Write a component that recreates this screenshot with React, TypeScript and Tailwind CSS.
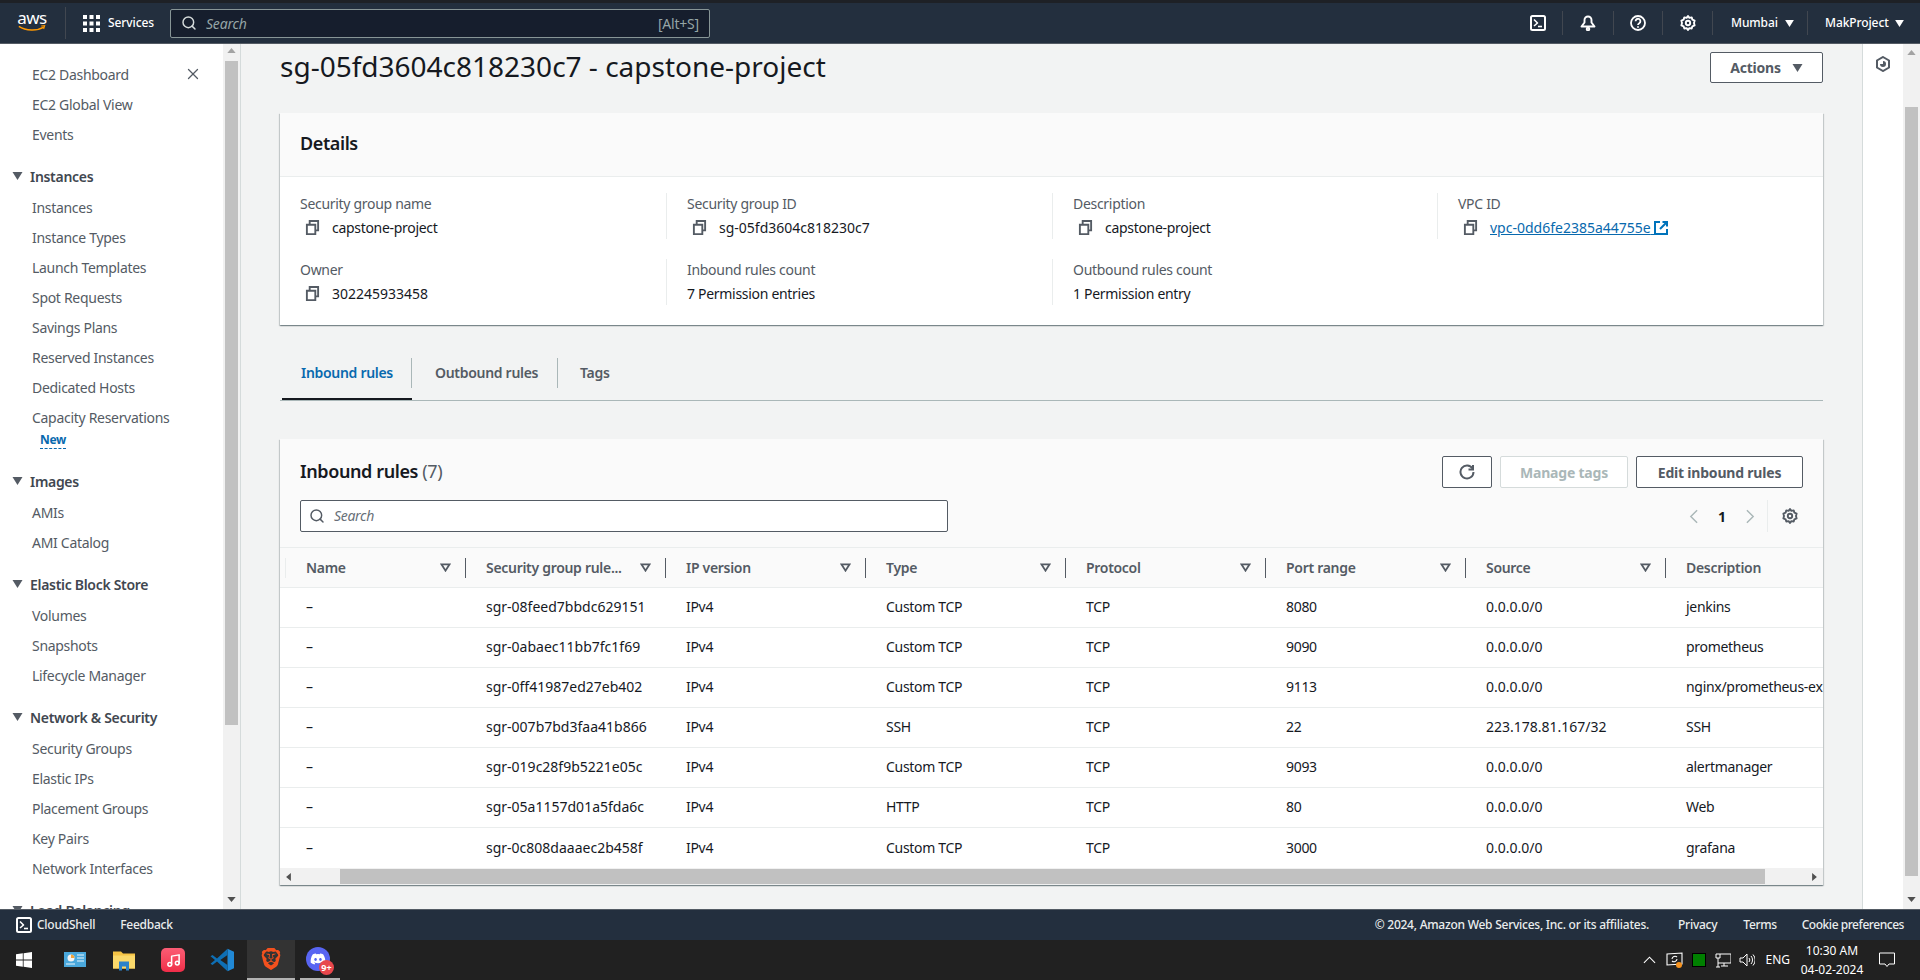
import { Music, Search, X } from "lucide-react";
import { FaDiscord } from "react-icons/fa";
import { SiBrave } from "react-icons/si";

const navGroups = [
  { title: "", items: ["EC2 Dashboard", "EC2 Global View", "Events"] },
  {
    title: "Instances",
    items: [
      "Instances",
      "Instance Types",
      "Launch Templates",
      "Spot Requests",
      "Savings Plans",
      "Reserved Instances",
      "Dedicated Hosts",
      "Capacity Reservations",
    ],
  },
  { title: "Images", items: ["AMIs", "AMI Catalog"] },
  { title: "Elastic Block Store", items: ["Volumes", "Snapshots", "Lifecycle Manager"] },
  {
    title: "Network & Security",
    items: ["Security Groups", "Elastic IPs", "Placement Groups", "Key Pairs", "Network Interfaces"],
  },
  { title: "Load Balancing", items: [] },
];

const columns = ["Name", "Security group rule...", "IP version", "Type", "Protocol", "Port range", "Source", "Description"];

const rules = [
  ["–", "sgr-08feed7bbdc629151", "IPv4", "Custom TCP", "TCP", "8080", "0.0.0.0/0", "jenkins"],
  ["–", "sgr-0abaec11bb7fc1f69", "IPv4", "Custom TCP", "TCP", "9090", "0.0.0.0/0", "prometheus"],
  ["–", "sgr-0ff41987ed27eb402", "IPv4", "Custom TCP", "TCP", "9113", "0.0.0.0/0", "nginx/prometheus-exporter"],
  ["–", "sgr-007b7bd3faa41b866", "IPv4", "SSH", "TCP", "22", "223.178.81.167/32", "SSH"],
  ["–", "sgr-019c28f9b5221e05c", "IPv4", "Custom TCP", "TCP", "9093", "0.0.0.0/0", "alertmanager"],
  ["–", "sgr-05a1157d01a5fda6c", "IPv4", "HTTP", "TCP", "80", "0.0.0.0/0", "Web"],
  ["–", "sgr-0c808daaaec2b458f", "IPv4", "Custom TCP", "TCP", "3000", "0.0.0.0/0", "grafana"],
];

const details = [
  [
    { label: "Security group name", value: "capstone-project", copy: true },
    { label: "Security group ID", value: "sg-05fd3604c818230c7", copy: true, wide: true },
    { label: "Description", value: "capstone-project", copy: true },
    { label: "VPC ID", value: "vpc-0dd6fe2385a44755e", copy: true, link: true, wide: true },
  ],
  [
    { label: "Owner", value: "302245933458", copy: true, wide: true },
    { label: "Inbound rules count", value: "7 Permission entries" },
    { label: "Outbound rules count", value: "1 Permission entry" },
  ],
];

function Caret({ className }: { className: string }) {
  return (
    <svg viewBox="0 0 10 8" className={className} fill="currentColor">
      <path d="M0 0h10L5 8z" />
    </svg>
  );
}

function CopyIcon() {
  return (
    <svg viewBox="0 0 16 16" className="h-[15px] w-[15px] shrink-0 text-[#545b64]" fill="none" stroke="currentColor" strokeWidth="2">
      <path d="M2 5h9v10H2z" />
      <path d="M5 5V1h9v10h-3" />
    </svg>
  );
}

function FilterIcon() {
  return (
    <svg viewBox="0 0 12 10" className="h-[9px] w-[11px] text-[#545b64]" fill="none" stroke="currentColor" strokeWidth="2">
      <path d="M1.500 1.500h9L6 8.500z" />
    </svg>
  );
}

function GearIcon({ className }: { className: string }) {
  return (
    <svg viewBox="0 0 16 16" className={className} fill="none" stroke="currentColor" strokeWidth="1.900" strokeLinejoin="round">
      <path d="M8 1l1.400 1.900 2.300-.5.7 2.300 2.200.9-.6 2.400.6 2.400-2.200.9-.7 2.200-2.300-.4L8 15l-1.400-1.900-2.300.4-.7-2.200-2.200-.9.6-2.400-.6-2.400 2.200-.9.7-2.300 2.300.5z" />
      <circle cx="8" cy="8" r="2.200" />
    </svg>
  );
}

function ShellIcon({ className }: { className: string }) {
  return (
    <svg viewBox="0 0 16 16" className={className} fill="none" stroke="currentColor" strokeWidth="2" strokeLinejoin="round">
      <rect x="1" y="1" width="14" height="14" rx="1.500" />
      <path d="M4 4.500L7.500 8 4 11" strokeWidth="1.600" />
      <path d="M8 11.500h4" strokeWidth="1.600" />
    </svg>
  );
}

function TopNav() {
  return (
    <div className="shrink-0">
      <div className="h-[3px] bg-[#1e2126]" />
      <header className="flex h-[41px] items-center border-b border-[#545b64] bg-[#232f3e] text-white">
        <div className="flex h-[32px] w-[66px] flex-col items-center justify-center border-r border-[#414750] pr-[1px]">
          <span className="-mt-[5px] text-[17px] leading-[18px] tracking-[-0.5px]">aws</span>
          <svg viewBox="0 0 32 8" className="-mt-[2px] h-[7px] w-[32px]" fill="none">
            <path d="M1 1.500C9 7 22 7 29.500 2.500" stroke="#ff9900" strokeWidth="1.800" />
            <path d="M26.500 1.200l4-.4-1.200 3.800" stroke="#ff9900" strokeWidth="1.200" />
          </svg>
        </div>
        <svg viewBox="0 0 17 17" className="ml-[17px] h-[17px] w-[17px]" fill="currentColor">
          <path d="M0 0h4v4H0zM6.500 0h4v4h-4zM13 0h4v4h-4zM0 6.500h4v4H0zM6.500 6.500h4v4h-4zM13 6.500h4v4h-4zM0 13h4v4H0zM6.500 13h4v4h-4zM13 13h4v4h-4z" />
        </svg>
        <span className="ml-2 w-[62px] text-[12px] font-medium tracking-[-0.1px]">Services</span>
        <div className="flex h-[29px] w-[540px] items-center rounded-[2px] border border-[#879596] bg-[#161e2d] px-[10px] text-[14px] tracking-[-0.2px] text-[#95a5a6]">
          <Search className="h-4 w-4 text-[#d5dbdb]" strokeWidth={2.2} />
          <span className="ml-[9px] flex-1 italic">Search</span>
          <span>[Alt+S]</span>
        </div>
        <div className="ml-auto flex h-full items-center">
          <div className="flex h-[24px] w-[50px] items-center justify-center border-r border-[#414750] pl-[1px]">
            <ShellIcon className="h-4 w-4" />
          </div>
          <div className="flex h-[24px] w-[51px] items-center justify-center border-r border-[#414750]">
            <svg viewBox="0 0 16 16" className="h-4 w-4" fill="none" stroke="currentColor" strokeWidth="1.900" strokeLinejoin="round">
              <path d="M1.500 11.500L4.500 7.500V5a3.500 3.500 0 0 1 7 0v2.500l3 4z" />
              <circle cx="8" cy="14" r="1.300" />
            </svg>
          </div>
          <div className="flex h-[24px] w-[49px] items-center justify-center border-r border-[#414750]">
            <svg viewBox="0 0 16 16" className="h-4 w-4" fill="none" stroke="currentColor" strokeWidth="1.800">
              <circle cx="8" cy="8" r="7" />
              <path d="M5.600 6.200a2.400 2.400 0 1 1 3.700 2c-.9.6-1.300 1-1.300 1.800" />
              <path d="M8 11.200v1.600" />
            </svg>
          </div>
          <div className="flex h-[24px] w-[50px] items-center justify-center border-r border-[#414750]">
            <GearIcon className="h-4 w-4" />
          </div>
          <div className="flex h-[24px] w-[95px] items-center border-r border-[#414750] pl-[18px] text-[12px] font-medium tracking-[-0.1px]">
            Mumbai
            <Caret className="ml-[7px] h-[7px] w-[9px]" />
          </div>
          <div className="flex w-[112px] items-center pl-[17px] text-[12px] font-medium tracking-[-0.1px]">
            MakProject
            <Caret className="ml-[6px] h-[7px] w-[9px]" />
          </div>
        </div>
      </header>
    </div>
  );
}

function Sidebar() {
  return (
    <aside className="flex w-[241px] shrink-0 border-r border-[#d5dbdb] bg-white">
      <div className="w-[223px] overflow-hidden pt-[15px] text-[14px] tracking-[-0.3px] text-[#545b64]">
        {navGroups.map((group) => (
          <div key={group.title} className="mb-[12px]">
            {group.title && (
              <div className="flex h-[31px] items-center pb-[1px] pl-[12px] font-semibold">
                <Caret className="mr-[7px] h-[8px] w-[11px]" />
                <span className="text-[#414750]">{group.title}</span>
              </div>
            )}
            {group.items.map((item) => (
              <div key={item} className="relative flex h-[30px] items-center pl-[32px]">
                {item}
                {item === "EC2 Dashboard" && (
                  <X className="absolute left-[184px] top-[6px] h-[18px] w-[18px]" strokeWidth={1.7} />
                )}
              </div>
            ))}
            {group.title === "Instances" && (
              <div className="h-[22px] pl-[40px] text-[12px] leading-[16px] font-bold text-[#0869ae]">
                <span className="border-b border-dashed border-[#0869ae]">New</span>
              </div>
            )}
          </div>
        ))}
      </div>
      <Scrollbar thumbHeight={664} arrowTop={4} className="w-[17px]" thumbMargin={7} />
    </aside>
  );
}

function Scrollbar({
  thumbHeight,
  arrowTop,
  thumbMargin,
  className,
}: {
  thumbHeight: number;
  arrowTop: number;
  thumbMargin: number;
  className: string;
}) {
  return (
    <div className={`flex flex-col items-center bg-[#f1f1f1] ${className}`}>
      <div style={{ paddingTop: arrowTop }} className="h-[17px] shrink-0">
        <svg viewBox="0 0 10 6" className="h-[5px] w-[9px] text-[#a3a3a3]" fill="currentColor">
          <path d="M5 0l5 6H0z" />
        </svg>
      </div>
      <div style={{ height: thumbHeight, marginTop: thumbMargin - 7 }} className="w-[13px] bg-[#c1c1c1]" />
      <svg viewBox="0 0 10 6" className="mt-auto mb-[7px] h-[5px] w-[9px] text-[#505050]" fill="currentColor">
        <path d="M0 0h10L5 6z" />
      </svg>
    </div>
  );
}

function DetailsCard() {
  return (
    <section className="bg-white shadow-[0_1px_1px_0_rgba(0,28,36,0.3),1px_1px_1px_0_rgba(0,28,36,0.15),-1px_1px_1px_0_rgba(0,28,36,0.15)]">
      <div className="flex h-[64px] items-center border-b border-[#eaeded] bg-[#fafafa] px-5 pb-[3px]">
        <h2 className="text-[18px] font-semibold tracking-[-0.4px] text-[#16191f]">Details</h2>
      </div>
      <div className="flex flex-col gap-5 pt-[16px] pb-5 pl-5 text-[14px] tracking-[-0.3px]">
        {details.map((row, rowIndex) => (
          <div key={rowIndex} className="grid grid-cols-[366px_386px_385px_365px]">
            {row.map((field, i) => (
              <div key={field.label} className={i === 0 ? "h-[46px]" : "h-[46px] border-l border-[#eaeded] pl-5"}>
                <div className="flex h-[23px] items-center pb-[2px] text-[#545b64]">{field.label}</div>
                <div className={field.wide ? "flex h-[23px] items-center tracking-[0px] text-[#16191f]" : "flex h-[23px] items-center text-[#16191f]"}>
                  {field.copy && (
                    <span className="mr-[12px] ml-[5px]">
                      <CopyIcon />
                    </span>
                  )}
                  {field.link ? (
                    <span className="flex items-center text-[#0869ae]">
                      <span className="underline">{field.value}&nbsp;</span>
                      <svg viewBox="0 0 14 14" className="h-[14px] w-[14px] text-[#0073bb]" fill="none" stroke="currentColor" strokeWidth="2">
                        <path d="M6 1H1v12h12V8" />
                        <path d="M6 8l7-7M8.500 1H13v4.500" />
                      </svg>
                    </span>
                  ) : (
                    field.value
                  )}
                </div>
              </div>
            ))}
          </div>
        ))}
      </div>
    </section>
  );
}

function Tabs() {
  return (
    <div className="mt-[33px] flex h-[43px] border-b border-[#aab7b8] pl-[2px] text-[14px] font-semibold tracking-[-0.3px] text-[#545b64]">
      <div className="h-[42px] w-[130px] border-b-[2px] border-[#16191f]">
        <div className="flex h-[30px] items-center border-r border-[#aab7b8] pb-[1px] pl-[19px] text-[#0869ae]">Inbound rules</div>
      </div>
      <div className="flex h-[30px] w-[146px] items-center border-r border-[#aab7b8] pb-[1px] pl-[23px]">Outbound rules</div>
      <div className="flex h-[30px] items-center pb-[1px] pl-[22px]">Tags</div>
    </div>
  );
}

function RulesCard() {
  return (
    <section className="mt-[38px] bg-white shadow-[0_1px_1px_0_rgba(0,28,36,0.3),1px_1px_1px_0_rgba(0,28,36,0.15),-1px_1px_1px_0_rgba(0,28,36,0.15)]">
      <div className="h-[109px] border-b border-[#eaeded] bg-[#fafafa] px-5 pt-[17px]">
        <div className="flex h-[32px] items-center">
          <h2 className="-mt-[2px] text-[18px] font-semibold tracking-[-0.4px] text-[#16191f]">
            Inbound rules <span className="font-normal text-[#545b64]">(7)</span>
          </h2>
          <div className="ml-auto flex gap-2 text-[14px] font-bold tracking-[-0.2px]">
            <button className="flex h-[32px] w-[50px] items-center justify-center rounded-[2px] border border-[#545b64] bg-white text-[#545b64]">
              <svg viewBox="0 0 16 16" className="h-4 w-4" fill="none" stroke="currentColor" strokeWidth="2">
                <path d="M13.500 4.500A6.500 6.500 0 1 0 14.500 8" />
                <path d="M14 1v4.500H9.500" />
              </svg>
            </button>
            <button className="h-[32px] w-[128px] rounded-[2px] border border-[#d5dbdb] bg-white text-[#aab7b8]">Manage tags</button>
            <button className="h-[32px] w-[167px] rounded-[2px] border border-[#545b64] bg-white text-[#545b64]">Edit inbound rules</button>
          </div>
        </div>
        <div className="mt-3 flex items-center">
          <div className="flex h-[32px] w-[648px] items-center rounded-[2px] border border-[#545b64] bg-white pb-[1px] pl-2">
            <Search className="h-4 w-4 text-[#545b64]" strokeWidth={2.2} />
            <span className="ml-[9px] text-[14px] italic tracking-[-0.3px] text-[#687078]">Search</span>
          </div>
          <div className="ml-auto flex h-[32px] items-center text-[14px] font-bold text-[#16191f]">
            <svg viewBox="0 0 10 16" className="h-[15px] w-[9px] text-[#aab7b8]" fill="none" stroke="currentColor" strokeWidth="1.600">
              <path d="M9 1L2 8l7 7" />
            </svg>
            <span className="mx-[20px]">1</span>
            <svg viewBox="0 0 10 16" className="h-[15px] w-[9px] text-[#aab7b8]" fill="none" stroke="currentColor" strokeWidth="1.600">
              <path d="M1 1l7 7-7 7" />
            </svg>
            <div className="ml-[12px] flex h-[32px] items-center border-l border-[#eaeded] pl-[14px] pr-[5px]">
              <GearIcon className="h-4 w-4 text-[#545b64]" />
            </div>
          </div>
        </div>
      </div>
      <div className="overflow-hidden">
        <div className="flex h-[40px] w-max items-center border-b border-[#eaeded] bg-[#fafafa] pl-[5px] text-[14px] font-semibold tracking-[-0.3px] text-[#545b64]">
          {columns.map((col, i) => (
            <div
              key={col}
              className={
                i === 0
                  ? "flex h-[20px] w-[180px] items-center border-l border-[#eaeded] pl-[20px]"
                  : "flex h-[20px] w-[200px] items-center border-l border-[#545b64] pl-[20px]"
              }
            >
              <span className="flex-1 whitespace-nowrap">{col}</span>
              {i < columns.length - 1 && (
                <span className="mr-[14px] flex items-center">
                  <FilterIcon />
                </span>
              )}
            </div>
          ))}
        </div>
        {rules.map((rule) => (
          <div key={rule[1]} className="flex h-[40px] w-max items-center border-b border-[#eaeded] pb-[2px] pl-[5px] text-[14px] tracking-[-0.3px] text-[#16191f] last:border-b-0">
            {rule.map((cell, i) => (
              <div
                key={i}
                className={
                  i === 0
                    ? "w-[180px] pl-[21px]"
                    : i === 1 || i === 6
                      ? "w-[200px] whitespace-nowrap pl-[21px] tracking-[0px]"
                      : "w-[200px] whitespace-nowrap pl-[21px]"
                }
              >
                {cell}
              </div>
            ))}
          </div>
        ))}
      </div>
      <div className="flex h-[17px] items-center bg-[#f1f1f1]">
        <svg viewBox="0 0 6 10" className="ml-[6px] h-[8px] w-[5px] text-[#505050]" fill="currentColor">
          <path d="M6 0v10L0 5z" />
        </svg>
        <div className="ml-[49px] h-[15px] w-[1425px] bg-[#c1c1c1]" />
        <svg viewBox="0 0 6 10" className="ml-[47px] h-[8px] w-[5px] text-[#505050]" fill="currentColor">
          <path d="M0 0v10l6-5z" />
        </svg>
      </div>
    </section>
  );
}

function Footer() {
  return (
    <footer className="flex h-[31px] shrink-0 items-center border-t border-[#545b64] bg-[#232f3e] px-4 text-[12px] font-medium tracking-[-0.25px] text-[#eaeded]">
      <ShellIcon className="h-4 w-4 text-white" />
      <span className="ml-[5px]">CloudShell</span>
      <span className="ml-[25px]">Feedback</span>
      <span className="ml-auto">© 2024, Amazon Web Services, Inc. or its affiliates.</span>
      <span className="ml-[29px]">Privacy</span>
      <span className="ml-[26px] tracking-[-0.35px]">Terms</span>
      <span className="ml-[25px] tracking-[-0.45px]">Cookie preferences</span>
    </footer>
  );
}

function Taskbar() {
  return (
    <div className="flex h-[40px] shrink-0 items-center bg-[#212121] text-white">
      <svg viewBox="0 0 16 16" className="ml-4 h-4 w-4" fill="currentColor">
        <path d="M0 2.300L6.800 1.300v6.300H0zM7.600 1.200L16 0v7.600H7.600zM0 8.400h6.800v6.300L0 13.700zM7.600 8.400H16V16l-8.400-1.200z" />
      </svg>
      <svg viewBox="0 0 22 16" className="ml-[32px] h-[16px] w-[22px]">
        <rect width="22" height="15" fill="#4aa8dc" />
        <circle cx="7" cy="6" r="3.500" fill="#f3f3f3" />
        <path d="M7 6V2.500A3.500 3.500 0 0 1 10.500 6z" fill="#f4a43a" />
        <path d="M13 3h7M13 6h7M13 9h7M2 12h9" stroke="#eaf5fb" strokeWidth="1.200" />
      </svg>
      <svg viewBox="0 0 22 20" className="ml-[27px] h-[21px] w-[22px]">
        <path d="M0 1h8l2 2h12v15H0z" fill="#f6c445" />
        <path d="M0 5h22v13H0z" fill="#fbd96a" />
        <path d="M6 11h10v9h-3v-4H9v4H6z" fill="#2c82c9" />
      </svg>
      <div className="ml-[26px] flex h-6 w-6 items-center justify-center rounded-[5px] bg-gradient-to-b from-[#fb5c74] to-[#f02c48]">
        <Music className="h-[15px] w-[15px]" strokeWidth={2.4} />
      </div>
      <svg viewBox="0 0 24 24" className="ml-[25px] h-6 w-6">
        <path d="M17.500 0.700L24 3.800v16.400l-6.500 3.100z" fill="#2189d6" />
        <path d="M17.500 0.700L7 10.500 2.500 7 0.500 8.200 5 12l-4.500 3.800 2 1.200L7 13.500l10.500 9.800V17L10.300 12l7.200-5z" fill="#0e6fb5" />
      </svg>
      <div className="ml-[13px] flex h-[40px] w-[48px] items-center justify-center border-b-2 border-[#b3b3b3] bg-[#333333]">
        <SiBrave className="h-[24px] w-[22px] text-[#f4511e]" />
      </div>
      <div className="relative ml-[5px] flex h-[40px] w-[40px] items-center justify-center border-b-2 border-[#b3b3b3]">
        <div className="-ml-[4px] flex h-[24px] w-[24px] items-center justify-center rounded-full bg-[#5865f2]">
          <FaDiscord className="h-[16px] w-[16px]" />
        </div>
        <span className="absolute left-[19px] top-[20px] flex h-[15px] w-[15px] items-center justify-center rounded-full bg-[#e8474c] text-[9px] font-bold">
          9+
        </span>
      </div>
      <div className="ml-auto flex items-center pr-[25px]">
        <svg viewBox="0 0 14 8" className="h-[8px] w-[13px]" fill="none" stroke="currentColor" strokeWidth="1.200">
          <path d="M1 7l6-6 6 6" />
        </svg>
        <svg viewBox="0 0 18 18" className="ml-[10px] h-[18px] w-[18px]" fill="none" stroke="currentColor" strokeWidth="1.100">
          <path d="M1 3l15-1v11l-15 1z" />
          <path d="M6 8a3 3 0 0 1 5-2M11 8a3 3 0 0 1-5 2" />
          <circle cx="13" cy="14" r="3" fill="#f7931e" stroke="none" />
        </svg>
        <div className="ml-[8px] h-[14px] w-[14px] border border-black bg-[#008000]" />
        <svg viewBox="0 0 16 16" className="ml-[9px] h-4 w-4" fill="none" stroke="currentColor" strokeWidth="1">
          <path d="M5 2h11v9H3" />
          <path d="M1 2h4v4H1zM3 6v9M1 15h4M9 11v3M6 14h7" />
        </svg>
        <svg viewBox="0 0 16 16" className="ml-[8px] h-4 w-4" fill="none" stroke="currentColor" strokeWidth="1">
          <path d="M1 6h3l4-4v12l-4-4H1z" />
          <path d="M10 6a3 3 0 0 1 0 4M12 4a6 6 0 0 1 0 8M14 2.500a8 8 0 0 1 0 11" />
        </svg>
        <span className="ml-[10px] text-[12px]">ENG</span>
        <div className="ml-[7px] w-[70px] whitespace-nowrap text-center text-[12px] leading-[19px]">
          <div>10:30 AM</div>
          <div>04-02-2024</div>
        </div>
        <svg viewBox="0 0 16 16" className="ml-[12px] h-4 w-4" fill="none" stroke="currentColor" strokeWidth="1">
          <path d="M0.500 1h15v11H10l-2 2.500L6 12H0.500z" />
        </svg>
      </div>
    </div>
  );
}

export default function App() {
  return (
    <div className="flex h-[980px] w-[1920px] flex-col overflow-hidden font-['Noto_Sans',sans-serif]">
      <TopNav />
      <div className="flex min-h-0 flex-1">
        <Sidebar />
        <main className="min-w-0 flex-1 overflow-hidden bg-[#f2f3f3] px-[39px] pt-2">
          <div className="flex h-[61px] items-start justify-between">
            <h1 className="-mt-1 text-[28px] leading-9 text-[#16191f]">sg-05fd3604c818230c7 - capstone-project</h1>
            <button className="flex h-[31px] w-[113px] items-center justify-center rounded-[2px] border border-[#545b64] bg-white text-[14px] font-bold tracking-[-0.2px] text-[#545b64]">
              Actions
              <Caret className="ml-[11px] h-[8px] w-[11px]" />
            </button>
          </div>
          <DetailsCard />
          <Tabs />
          <RulesCard />
        </main>
        <div className="flex w-[41px] shrink-0 justify-center border-l border-[#d5dbdb] bg-white pt-[12px]">
          <svg viewBox="0 0 16 16" className="h-4 w-4 text-[#545b64]" fill="none" stroke="currentColor" strokeWidth="2">
            <path d="M8 1l6 3.500v7L8 15l-6-3.500v-7z" />
            <path d="M8 8V5a3 3 0 1 1-3 3z" fill="currentColor" stroke="none" />
          </svg>
        </div>
        <Scrollbar thumbHeight={769} arrowTop={6} thumbMargin={53} className="w-[17px]" />
      </div>
      <Footer />
      <Taskbar />
    </div>
  );
}
